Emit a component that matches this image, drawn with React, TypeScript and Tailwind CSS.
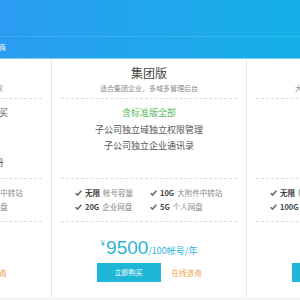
import React from "react";

type Feature = { num: string; label: string };

type Plan = {
  title: string;
  subtitle: string;
  highlight?: string;
  rows: string[];
  features: Feature[];
  price: string;
  unit: string;
};

const plans: Plan[] = [
  {
    title: "标准版",
    subtitle: "适合中小型企业，企业邮箱专家",
    rows: ["支持多域名绑定，自由购买", "企业通讯录", "手机客户端", "支持自定义域名免费注册"],
    features: [
      { num: "无限", label: "帐号容量" },
      { num: "1G", label: "大附件中转站" },
      { num: "10G", label: "企业网盘" },
      { num: "5G", label: "个人网盘" },
    ],
    price: "300",
    unit: "/5帐号/年",
  },
  {
    title: "集团版",
    subtitle: "适合集团企业，多域多管理后台",
    highlight: "含标准版全部",
    rows: ["子公司独立域独立权限管理", "子公司独立企业通讯录"],
    features: [
      { num: "无限", label: "帐号容量" },
      { num: "10G", label: "大附件中转站" },
      { num: "20G", label: "企业网盘" },
      { num: "5G", label: "个人网盘" },
    ],
    price: "9500",
    unit: "/100帐号/年",
  },
  {
    title: "定制版",
    subtitle: "大型企业及机构，安全稳定高效",
    highlight: "含集团版全部",
    rows: ["独立部署", "专属服务"],
    features: [
      { num: "无限", label: "帐号容量" },
      { num: "20G", label: "大附件中转站" },
      { num: "100G", label: "企业网盘" },
      { num: "10G", label: "个人网盘" },
    ],
    price: "面议",
    unit: "",
  },
];

function Check() {
  return (
    <svg width="7" height="6" viewBox="0 0 7 6" className="shrink-0">
      <path d="M0.6 3.2 L2.6 5.1 L6.4 0.8" fill="none" stroke="#666" strokeWidth="1.5" />
    </svg>
  );
}

function PlanCard({ plan }: { plan: Plan }) {
  return (
    <div className="w-[195px] shrink-0 h-[238px] bg-white border-r border-[#e8e8e8] flex flex-col items-center">
      <div className="mt-[6px] h-[16px] leading-[16px] text-[12px] text-[#444]">{plan.title}</div>
      <div className="mt-[3px] h-[9px] leading-[9px] text-[7px] text-[#8a8a8a] whitespace-nowrap">{plan.subtitle}</div>
      <div className="mt-[5px] self-stretch mx-[9px] border-t border-dashed border-[#dcdcdc]" />
      <div className="mt-[6px] h-[73px] flex flex-col items-center text-[9px] leading-[16.6px] whitespace-nowrap">
        {plan.highlight && <div className="text-[#5cb85c]">{plan.highlight}</div>}
        {plan.rows.map((r) => (
          <div key={r} className="text-[#555]">
            {r}
          </div>
        ))}
      </div>
      <div className="self-stretch mx-[9px] border-t border-dashed border-[#dcdcdc]" />
      <div className="mt-[7px] self-stretch pl-[23px] grid grid-cols-[75px_95px] text-[7.5px] leading-[14px] whitespace-nowrap">
        {plan.features.map((f) => (
          <div key={f.num + f.label} className="flex items-center gap-[3px]">
            <Check />
            <span className="font-bold text-[#444]">{f.num}</span>
            <span className="text-[#888]">{f.label}</span>
          </div>
        ))}
      </div>
      <div className="mt-[7px] self-stretch mx-[9px] border-t border-dashed border-[#dcdcdc]" />
      <div className="mt-[16px] h-[20px] flex items-baseline text-[#2bb5d8] whitespace-nowrap">
        <span className="text-[8px] self-start leading-[10px] mr-[1px]">¥</span>
        <span className="text-[19px] leading-[20px] font-['Liberation_Sans',sans-serif]">{plan.price}</span>
        <span className="text-[9px]">{plan.unit}</span>
      </div>
      <div className="mt-[5px] flex items-center gap-[11px] whitespace-nowrap">
        <div className="w-[64px] h-[19px] bg-[#1fb6d7] text-white text-[7px] flex items-center justify-center">立即购买</div>
        <div className="text-[7.5px] text-[#f0a24a]">在线咨询</div>
      </div>
    </div>
  );
}

export default function App() {
  return (
    <div className="w-[300px] h-[300px] overflow-hidden bg-[#f5f5f5] font-['Noto_Sans_CJK_SC','Noto_Sans',sans-serif]">
      <div className="h-[59px] bg-gradient-to-r from-[#2a9cf2] to-[#14b0e7] flex flex-col">
        <div className="h-[36px]" />
        <div className="flex-1 border-t border-white/10 flex items-center">
          <span className="-ml-[1px] text-[7px] text-white">商</span>
        </div>
        <div className="h-[1px] bg-[#7fd0f5]" />
      </div>
      <div className="flex -ml-[143px]">
        {plans.map((p) => (
          <PlanCard key={p.title} plan={p} />
        ))}
      </div>
    </div>
  );
}
